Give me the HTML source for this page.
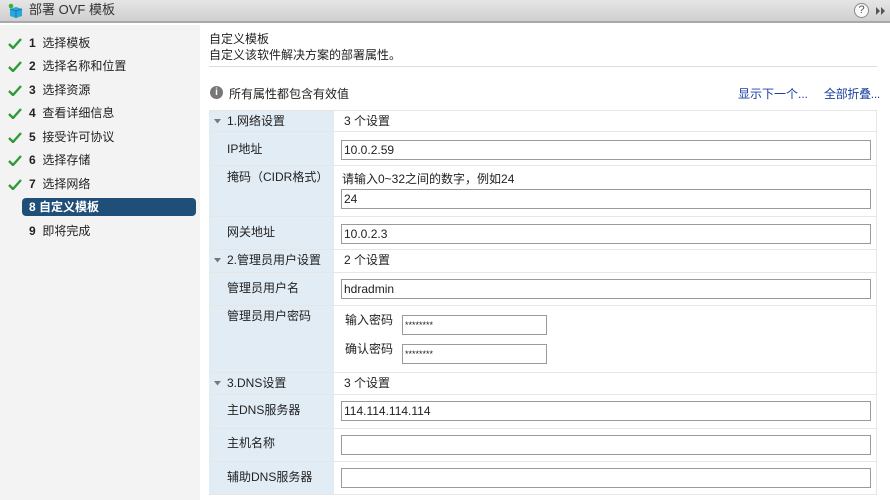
<!DOCTYPE html>
<html><head><meta charset="utf-8"><style>
*{margin:0;padding:0;box-sizing:border-box}
body{width:890px;height:500px;overflow:hidden;background:#fff;font-family:"Liberation Sans","Noto Sans CJK SC",sans-serif;font-size:12px;color:#222;position:relative}
.a{position:absolute;white-space:nowrap;line-height:14px}
.title{left:0;top:0;width:890px;height:23px;background:linear-gradient(#e6e6e6,#cfcfcf);border-bottom:2px solid #a9a9a9}
.side{left:0;top:25px;width:200px;height:475px;background:#f3f3f3}
.it{position:absolute;left:8px;height:16px;line-height:16px;white-space:nowrap}
.it svg{position:absolute;left:0;top:3px}
.it span{position:absolute;left:21px}
.inp{position:absolute;border:1px solid #9a9a9a;background:#fff;height:20px;font-size:12px;padding:1px 2px;line-height:16px}
.lab{position:absolute;left:209px;width:125px;background:#e2ecf5}
.row{position:absolute;left:209px;width:668px;border-top:1px solid #e6e6e6}
.tri{position:absolute;left:214px}
</style></head><body>
<div class="a title"></div>
<svg class="a" style="left:7px;top:3px" width="16" height="16"><path d="M3 6 L9 4 L15 6 L15 13 L9 15 L3 13Z" fill="#2aa6d8"/><path d="M3 6 L9 8 L15 6 M9 8 L9 15" stroke="#0f7fb0" fill="none"/><circle cx="4" cy="3" r="2.3" fill="#3bb33b"/></svg>
<div class="a" style="left:29px;top:3px;font-size:13px;color:#333">部署 OVF 模板</div>
<div class="a" style="left:854px;top:3px;width:15px;height:15px;border:1px solid #888;border-radius:50%;background:#fafafa;font-size:11px;text-align:center;line-height:13px;color:#555">?</div>
<svg class="a" style="left:875px;top:6px" width="12" height="10"><path d="M1 1 L5 5 L1 9Z M6 1 L10 5 L6 9Z" fill="#555"/></svg>
<div class="a side"></div>
<div class="it" style="top:35px"><svg width="14" height="11"><path d="M1 6 L5 10 L13 1" stroke="#2f9a3a" stroke-width="2.4" fill="none"/></svg><span><b>1</b>&nbsp; 选择模板</span></div>
<div class="it" style="top:58px"><svg width="14" height="11"><path d="M1 6 L5 10 L13 1" stroke="#2f9a3a" stroke-width="2.4" fill="none"/></svg><span><b>2</b>&nbsp; 选择名称和位置</span></div>
<div class="it" style="top:82px"><svg width="14" height="11"><path d="M1 6 L5 10 L13 1" stroke="#2f9a3a" stroke-width="2.4" fill="none"/></svg><span><b>3</b>&nbsp; 选择资源</span></div>
<div class="it" style="top:105px"><svg width="14" height="11"><path d="M1 6 L5 10 L13 1" stroke="#2f9a3a" stroke-width="2.4" fill="none"/></svg><span><b>4</b>&nbsp; 查看详细信息</span></div>
<div class="it" style="top:129px"><svg width="14" height="11"><path d="M1 6 L5 10 L13 1" stroke="#2f9a3a" stroke-width="2.4" fill="none"/></svg><span><b>5</b>&nbsp; 接受许可协议</span></div>
<div class="it" style="top:152px"><svg width="14" height="11"><path d="M1 6 L5 10 L13 1" stroke="#2f9a3a" stroke-width="2.4" fill="none"/></svg><span><b>6</b>&nbsp; 选择存储</span></div>
<div class="it" style="top:176px"><svg width="14" height="11"><path d="M1 6 L5 10 L13 1" stroke="#2f9a3a" stroke-width="2.4" fill="none"/></svg><span><b>7</b>&nbsp; 选择网络</span></div>
<div class="a" style="left:22px;top:198px;width:174px;height:18px;background:#1f4e79;border-radius:4px;color:#fff;font-weight:bold;padding-left:7px;line-height:18px">8 自定义模板</div>
<div class="it" style="top:223px"><span><b>9</b>&nbsp; 即将完成</span></div>
<div class="a" style="left:209px;top:31px;line-height:16px">自定义模板<br>自定义该软件解决方案的部署属性。</div>
<div class="a" style="left:209px;top:66px;width:668px;border-top:1px solid #ddd"></div>
<div class="a" style="left:210px;top:86px;width:13px;height:13px;border-radius:50%;background:#777;color:#fff;font-size:10px;font-weight:bold;text-align:center;line-height:13px">i</div>
<div class="a" style="left:229px;top:87px">所有属性都包含有效值</div>
<div class="a" style="left:738px;top:87px;color:#1a3fa0">显示下一个...</div>
<div class="a" style="left:824px;top:87px;color:#1a3fa0;letter-spacing:-0.3px">全部折叠...</div>
<div class="a" style="left:209px;top:110px;width:668px;height:385px;border:1px solid #e6e6e6"></div>
<div class="lab" style="top:111px;height:383px"></div>
<div class="row" style="top:131px"></div><div class="row" style="top:165px"></div><div class="row" style="top:216px"></div><div class="row" style="top:249px"></div><div class="row" style="top:272px"></div><div class="row" style="top:305px"></div><div class="row" style="top:372px"></div><div class="row" style="top:394px"></div><div class="row" style="top:428px"></div><div class="row" style="top:461px"></div>
<svg class="tri" style="top:119px" width="8" height="5"><path d="M0 0 L7 0 L3.5 4.5Z" fill="#777"/></svg><div class="a" style="left:227px;top:114px">1.网络设置</div><div class="a" style="left:344px;top:114px">3 个设置</div>
<div class="a" style="left:227px;top:142px">IP地址</div><div class="inp" style="left:341px;top:140px;width:530px">10.0.2.59</div>
<div class="a" style="left:227px;top:170px">掩码（CIDR格式）</div><div class="a" style="left:342px;top:172px">请输入0~32之间的数字，例如24</div><div class="inp" style="left:341px;top:189px;width:530px">24</div>
<div class="a" style="left:227px;top:225px">网关地址</div><div class="inp" style="left:341px;top:224px;width:530px">10.0.2.3</div>
<svg class="tri" style="top:258px" width="8" height="5"><path d="M0 0 L7 0 L3.5 4.5Z" fill="#777"/></svg><div class="a" style="left:227px;top:253px">2.管理员用户设置</div><div class="a" style="left:344px;top:253px">2 个设置</div>
<div class="a" style="left:227px;top:281px">管理员用户名</div><div class="inp" style="left:341px;top:279px;width:530px">hdradmin</div>
<div class="a" style="left:227px;top:309px">管理员用户密码</div>
<div class="a" style="left:345px;top:313px">输入密码</div><div class="inp" style="left:402px;top:315px;width:145px;font-size:9px">********</div>
<div class="a" style="left:345px;top:342px">确认密码</div><div class="inp" style="left:402px;top:344px;width:145px;font-size:9px">********</div>
<svg class="tri" style="top:381px" width="8" height="5"><path d="M0 0 L7 0 L3.5 4.5Z" fill="#777"/></svg><div class="a" style="left:227px;top:376px">3.DNS设置</div><div class="a" style="left:344px;top:376px">3 个设置</div>
<div class="a" style="left:227px;top:403px">主DNS服务器</div><div class="inp" style="left:341px;top:401px;width:530px">114.114.114.114</div>
<div class="a" style="left:227px;top:436px">主机名称</div><div class="inp" style="left:341px;top:435px;width:530px"></div>
<div class="a" style="left:227px;top:470px">辅助DNS服务器</div><div class="inp" style="left:341px;top:468px;width:530px"></div>
</body></html>
